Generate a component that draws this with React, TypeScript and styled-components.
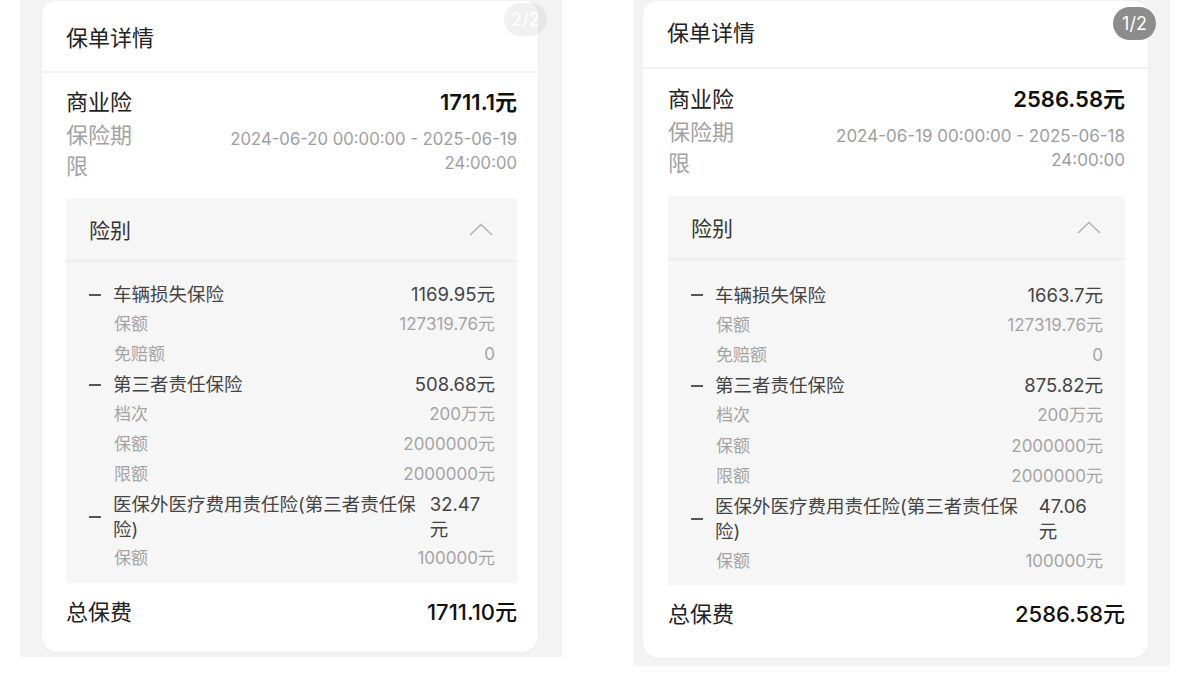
import React from 'react';
import styled, { createGlobalStyle } from 'styled-components';

const GlobalStyle = createGlobalStyle`
  body {
    margin: 0;
    background: #ffffff;
    font-family: Inter, "Noto Sans CJK SC", sans-serif;
  }
`;

type Sub = { label: string; value: string };
type Cover = { name: string; premium: string; subs: Sub[] };
type Layout = {
  frameW: number;
  framePad: string;
  headerH: number;
  titleShift: number;
  bodyPad: string;
  topGap: number;
  boxGap: number;
  listTop: number;
  rowPad: number;
  bottomPad: number;
  dateSize: number;
  badgeLeft: number;
  badgeTop: number;
  faded: boolean;
};
type Policy = {
  page: string;
  premium: string;
  period: string[];
  covers: Cover[];
  total: string;
  layout: Layout;
};

const policies: Policy[] = [
  {
    page: '2/2',
    premium: '1711.1元',
    period: ['2024-06-20 00:00:00 - 2025-06-19', '24:00:00'],
    covers: [
      {
        name: '车辆损失保险',
        premium: '1169.95元',
        subs: [
          { label: '保额', value: '127319.76元' },
          { label: '免赔额', value: '0' },
        ],
      },
      {
        name: '第三者责任保险',
        premium: '508.68元',
        subs: [
          { label: '档次', value: '200万元' },
          { label: '保额', value: '2000000元' },
          { label: '限额', value: '2000000元' },
        ],
      },
      {
        name: '医保外医疗费用责任险(第三者责任保险)',
        premium: '32.47元',
        subs: [{ label: '保额', value: '100000元' }],
      },
    ],
    total: '1711.10元',
    layout: {
      frameW: 542,
      framePad: '1px 24px 5px 22px',
      headerH: 72,
      titleShift: 0,
      bodyPad: '0 21px 25px 24px',
      topGap: 13,
      boxGap: 16,
      listTop: 18,
      rowPad: 2.45,
      bottomPad: 9,
      dateSize: 16.7,
      badgeLeft: 484,
      badgeTop: 3,
      faded: true,
    },
  },
  {
    page: '1/2',
    premium: '2586.58元',
    period: ['2024-06-19 00:00:00 - 2025-06-18', '24:00:00'],
    covers: [
      {
        name: '车辆损失保险',
        premium: '1663.7元',
        subs: [
          { label: '保额', value: '127319.76元' },
          { label: '免赔额', value: '0' },
        ],
      },
      {
        name: '第三者责任保险',
        premium: '875.82元',
        subs: [
          { label: '档次', value: '200万元' },
          { label: '保额', value: '2000000元' },
          { label: '限额', value: '2000000元' },
        ],
      },
      {
        name: '医保外医疗费用责任险(第三者责任保险)',
        premium: '47.06元',
        subs: [{ label: '保额', value: '100000元' }],
      },
    ],
    total: '2586.58元',
    layout: {
      frameW: 537,
      framePad: '1px 22px 8px 10px',
      headerH: 68,
      titleShift: 6,
      bodyPad: '0 23px 29px 25px',
      topGap: 14,
      boxGap: 17,
      listTop: 20,
      rowPad: 2.6,
      bottomPad: 8,
      dateSize: 17,
      badgeLeft: 480,
      badgeTop: 7,
      faded: false,
    },
  },
];

const Page = styled.div`
  display: flex;
  align-items: flex-start;
  gap: 71px;
  padding-left: 20px;
`;

const Frame = styled.div<{ $w: number; $pad: string }>`
  position: relative;
  width: ${({ $w }) => $w}px;
  padding: ${({ $pad }) => $pad};
  box-sizing: border-box;
  background: #f3f3f3;
`;

const Badge = styled.div<{ $left: number; $top: number; $faded: boolean }>`
  position: absolute;
  left: ${({ $left }) => $left}px;
  top: ${({ $top }) => $top}px;
  width: 43px;
  height: 33px;
  border-radius: 17px;
  background: #8c8c8c;
  color: #ffffff;
  font-size: 18px;
  display: flex;
  align-items: center;
  justify-content: center;
  opacity: ${({ $faded }) => ($faded ? 0.12 : 1)};
`;

const Card = styled.div`
  background: #ffffff;
  border-radius: 14px 14px 16px 16px;
  box-shadow: 0 1px 3px rgba(0, 0, 0, 0.04);
`;

const Header = styled.div<{ $h: number; $shift: number }>`
  height: ${({ $h }) => $h}px;
  box-sizing: border-box;
  padding: 0 24px ${({ $shift }) => $shift}px;
  display: flex;
  align-items: center;
  font-size: 22px;
  color: #222222;
  border-bottom: 2px solid #f1f1f1;
`;

const Body = styled.div<{ $pad: string }>`
  padding: ${({ $pad }) => $pad};
`;

const MainRow = styled.div<{ $mt: number }>`
  margin-top: ${({ $mt }) => $mt}px;
  display: flex;
  justify-content: space-between;
  align-items: center;
  line-height: 32px;
  font-size: 22px;
  color: #222222;
`;

const Amount = styled.span`
  font-weight: 600;
  color: #111111;
`;

const PeriodRow = styled.div`
  display: flex;
  justify-content: space-between;
`;

const PeriodLabel = styled.div`
  width: 70px;
  padding-top: 2px;
  font-size: 22px;
  line-height: 31px;
  color: #a3a3a3;
`;

const PeriodValue = styled.div<{ $size: number }>`
  padding-top: 9px;
  text-align: right;
  font-size: ${({ $size }) => $size}px;
  line-height: 24px;
  color: #9e9e9e;
`;

const Box = styled.div<{ $mt: number; $pb: number }>`
  margin-top: ${({ $mt }) => $mt}px;
  background: #f6f6f6;
  padding-bottom: ${({ $pb }) => $pb}px;
`;

const BoxHeader = styled.div`
  height: 64px;
  box-sizing: border-box;
  padding: 0 24px 0 23px;
  display: flex;
  align-items: center;
  justify-content: space-between;
  font-size: 21px;
  color: #333333;
  border-bottom: 2px solid #ededed;
`;

const List = styled.div<{ $pt: number }>`
  padding: ${({ $pt }) => $pt}px 22px 0 23px;
`;

const ItemRow = styled.div<{ $pad: number; $sub?: boolean }>`
  display: flex;
  align-items: center;
  justify-content: space-between;
  gap: 8px;
  padding: ${({ $pad }) => $pad}px 0;
  line-height: 25px;
  font-size: ${({ $sub }) => ($sub ? '17px' : '18.5px')};
  color: ${({ $sub }) => ($sub ? '#a5a5a5' : '#444444')};
`;

const Name = styled.div<{ $sub?: boolean }>`
  display: flex;
  align-items: center;
  padding-left: ${({ $sub }) => ($sub ? '25px' : '0')};
`;

const Dash = styled.span`
  flex-shrink: 0;
  width: 12px;
  height: 2px;
  margin-right: 12px;
  background: #555555;
`;

const Total = styled.div`
  margin-top: 14px;
  display: flex;
  justify-content: space-between;
  line-height: 30px;
  font-size: 22px;
  color: #222222;
`;

const TotalAmount = styled.span`
  font-weight: 500;
  color: #111111;
`;

const Chevron = () => (
  <svg width="24" height="13" viewBox="0 0 24 13">
    <polyline points="1,12 12,1.5 23,12" fill="none" stroke="#b3b3b3" strokeWidth="1.6" />
  </svg>
);

const PolicyPanel: React.FC<{ policy: Policy }> = ({ policy }) => {
  const l = policy.layout;
  return (
    <Frame $w={l.frameW} $pad={l.framePad}>
      <Card>
        <Header $h={l.headerH} $shift={l.titleShift}>保单详情</Header>
        <Body $pad={l.bodyPad}>
          <MainRow $mt={l.topGap}>
            <span>商业险</span>
            <Amount>{policy.premium}</Amount>
          </MainRow>
          <PeriodRow>
            <PeriodLabel>保险期限</PeriodLabel>
            <PeriodValue $size={l.dateSize}>
              {policy.period.map(line => (
                <div key={line}>{line}</div>
              ))}
            </PeriodValue>
          </PeriodRow>
          <Box $mt={l.boxGap} $pb={l.bottomPad}>
            <BoxHeader>
              <span>险别</span>
              <Chevron />
            </BoxHeader>
            <List $pt={l.listTop}>
              {policy.covers.map(cover => (
                <React.Fragment key={cover.name}>
                  <ItemRow $pad={l.rowPad}>
                    <Name>
                      <Dash />
                      <span>{cover.name}</span>
                    </Name>
                    <span>{cover.premium}</span>
                  </ItemRow>
                  {cover.subs.map(sub => (
                    <ItemRow key={sub.label} $pad={l.rowPad} $sub>
                      <Name $sub>{sub.label}</Name>
                      <span>{sub.value}</span>
                    </ItemRow>
                  ))}
                </React.Fragment>
              ))}
            </List>
          </Box>
          <Total>
            <span>总保费</span>
            <TotalAmount>{policy.total}</TotalAmount>
          </Total>
        </Body>
      </Card>
      <Badge $left={l.badgeLeft} $top={l.badgeTop} $faded={l.faded}>
        {policy.page}
      </Badge>
    </Frame>
  );
};

const App: React.FC = () => (
  <>
    <GlobalStyle />
    <Page>
      {policies.map(p => (
        <PolicyPanel key={p.page} policy={p} />
      ))}
    </Page>
  </>
);

export default App;
